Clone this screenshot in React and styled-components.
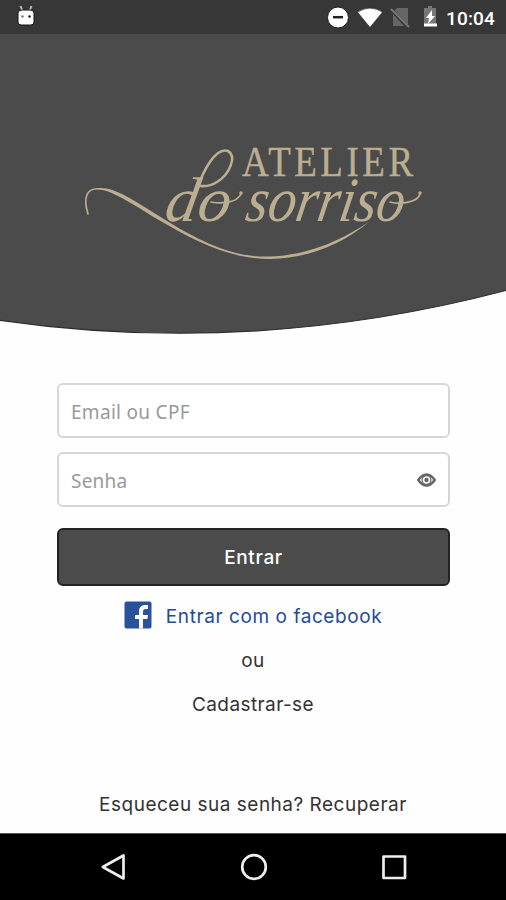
import React from "react";
import styled, { createGlobalStyle } from "styled-components";

const GlobalStyle = createGlobalStyle`
  *, *::before, *::after { box-sizing: border-box; }
  body { margin: 0; background: #fff; }
  svg { display: block; flex: none; }
`;

const Screen = styled.main`
  width: 506px;
  height: 900px;
  display: flex;
  flex-direction: column;
  overflow: hidden;
  background: #fefefe;
  font-family: Inter, "Open Sans", sans-serif;
`;

const StatusBar = styled.header`
  height: 34px;
  flex: none;
  display: flex;
  align-items: center;
  justify-content: space-between;
  padding: 0 10px 0 16px;
  background: #373737;
`;

const StatusIcons = styled.div`
  display: flex;
  align-items: center;
`;

const Clock = styled.time`
  width: 50px;
  margin-left: 8px;
  padding-top: 3px;
  font: 500 19px/22px Roboto, sans-serif;
  letter-spacing: 0.15px;
  white-space: nowrap;
  color: #fff;
`;

const Hero = styled.section`
  height: 301px;
  flex: none;
`;

const Form = styled.form`
  display: flex;
  flex-direction: column;
  margin: 48px 56px 0 57px;
`;

const Field = styled.label`
  height: 55px;
  margin-bottom: ${(p) => p.$gap}px;
  display: flex;
  align-items: center;
  padding: 0 12px;
  border: 2px solid #d6d6d6;
  border-radius: 6px;
  background: #fff;
`;

const Input = styled.input`
  flex: 1;
  min-width: 0;
  padding: 2px 0 0;
  border: 0;
  outline: 0;
  background: transparent;
  font: 400 19px/26px "Noto Sans", sans-serif;
  letter-spacing: ${(p) => p.$tracking}px;
  &::placeholder { color: #999; opacity: 1; }
`;

const SubmitButton = styled.button`
  height: 58px;
  padding: 1px 0 0;
  border: 2px solid #222;
  border-radius: 6px;
  background: #4b4b4b;
  color: #fff;
  font: 500 19px/24px Inter, sans-serif;
  letter-spacing: 0.65px;
`;

const Links = styled.nav`
  flex: 1;
  display: flex;
  flex-direction: column;
  align-items: center;
  padding-top: 14px;
`;

const FacebookLink = styled.a`
  height: 30px;
  display: flex;
  align-items: center;
  gap: 14px;
  color: #234b98;
`;

const Label = styled.span`
  font-size: 19px;
  line-height: 24px;
  white-space: nowrap;
  letter-spacing: ${(p) => p.$tracking || 0}px;
  margin-top: ${(p) => p.$top || 0}px;
  color: ${(p) => p.$color || "#333"};
`;

const NavBar = styled.footer`
  height: 67px;
  flex: none;
  display: flex;
  align-items: center;
  justify-content: space-between;
  padding: 0 98px 0 99px;
  border-top: 1px solid #555;
  background: #000;
`;

function DebugIcon() {
  return (
    <svg width="20" height="24" viewBox="0 0 20 24">
      <path d="M4.500 1l2 5M15.500 1l-2 5" stroke="#bbb" strokeWidth="2" />
      <path d="M2 8q0-3 4-3h8q4 0 4 3v9q0 3-3 3H5q-3 0-3-3z" fill="#fff" stroke="#171717" />
      <circle cx="6.500" cy="11.500" r="1.200" fill="#777" />
      <circle cx="13.500" cy="11.500" r="1.200" fill="#111" />
    </svg>
  );
}

function SystemIcons() {
  return (
    <svg width="112" height="26" viewBox="0 0 112 26">
      <circle cx="12" cy="13.500" r="10.500" fill="#fff" stroke="#1e1e1e" />
      <path d="M7 13.200h10" stroke="#222" strokeWidth="2.500" />
      <path d="M31.500 8.200Q44 0 56.500 8.200L44 23.500Z" fill="#fff" stroke="#222" strokeWidth=".7" />
      <path d="M71 4h11v17L68.500 6.500z M67 10v12h11z" fill="#666" />
      <path d="M65 5l18 18" stroke="#777" strokeWidth="2" />
      <path d="M99 4h3V2h4v2h4v18H98V4z" fill="#777" />
      <path d="M106 6l-6 8h3l-1 6 7-8h-3z" fill="#fff" />
      <path d="M98 21h13" stroke="#fff" strokeWidth="3" />
    </svg>
  );
}

function HeroArt() {
  return (
    <svg width="506" height="301" viewBox="0 34 506 301" fill="none">
      <path d="M0 34H506V290.500Q253 356.800 0 320.300Z" fill="#4b4b4b" />
      <path d="M0 320.300Q253 356.800 506 290.500" stroke="#2e2e2e" strokeWidth="1.200" />
      <g fill="#bcae91" fontFamily="Liberation Serif, serif">
        <text transform="translate(242 176) scale(.86 1)" fontSize="43" letterSpacing="4.1" stroke="#bcae91" strokeWidth=".4">ATELIER</text>
        <g fontStyle="italic">
          <text transform="translate(163 221) skewX(-10)" fontSize="63" textLength="65" lengthAdjust="spacingAndGlyphs">do</text>
          <text transform="translate(244 221) skewX(-10)" fontSize="63" textLength="158" lengthAdjust="spacingAndGlyphs">sorriso</text>
        </g>
      </g>
      <g stroke="#bcae91" strokeLinecap="round">
        <path d="M197 190C203 170 216 147 228 151C237 156 230 174 217 182Q209 187 201 186" strokeWidth="2.600" />
        <path d="M211 202C221 204 237 203 241 194" strokeWidth="1.700" />
        <path d="M390 202C401 205 418 202 420 194" strokeWidth="1.700" />
        <circle cx="241" cy="193" r="1" strokeWidth="1.500" />
        <circle cx="420" cy="193" r="1" strokeWidth="1.500" />
        <path d="M88 214C83 198 86 187 101 189" strokeWidth="1.700" />
      </g>
      <path
        d="M94 189C110 184 132 199 159 216C203 244 236 258 270 256.500C310 255 341 240 369 222C342 244 310 258 270 259C229 259 195 241 157 219C131 203 109 188 94 189Z"
        fill="#bcae91"
      />
    </svg>
  );
}

function EyeIcon() {
  return (
    <svg width="19" height="14" viewBox="0 0 19 14" fill="none" stroke="#666">
      <path d="M1.300 7Q5 1.500 9.500 1.500T17.700 7Q14 12.500 9.500 12.500T1.300 7Z" strokeWidth="2.500" />
      <circle cx="9.500" cy="7" r="4.400" strokeWidth="1.200" />
      <circle cx="9.500" cy="7" r="2.200" fill="#666" stroke="none" />
    </svg>
  );
}

function FacebookIcon() {
  return (
    <svg width="28" height="28" viewBox="0 0 28 28">
      <rect x=".5" y=".5" width="27" height="27" rx="2" fill="#29529a" />
      <path d="M15 27.500V18h-4v-4h4v-3.500Q15 4 21 4h3v4h-2.500Q19 8 19 11v3h5l-.6 4H19v9.500z" fill="#fff" />
    </svg>
  );
}

function BackIcon() {
  return (
    <svg width="28" height="28" viewBox="0 0 28 28" fill="none" stroke="#eee" strokeWidth="2.700" strokeLinejoin="round">
      <path d="M24.500 2.500v23L3.800 14z" />
    </svg>
  );
}

function HomeIcon() {
  return (
    <svg width="28" height="28" viewBox="0 0 28 28" fill="none" stroke="#eee" strokeWidth="2.700">
      <circle cx="14" cy="14" r="11.800" />
    </svg>
  );
}

function RecentsIcon() {
  return (
    <svg width="28" height="28" viewBox="0 0 28 28" fill="none" stroke="#eee" strokeWidth="2.700" strokeLinejoin="round">
      <rect x="3.500" y="3.500" width="21.500" height="21.500" />
    </svg>
  );
}

export default function App() {
  return (
    <>
      <GlobalStyle />
      <Screen>
        <StatusBar>
          <DebugIcon />
          <StatusIcons>
            <SystemIcons />
            <Clock>10:04</Clock>
          </StatusIcons>
        </StatusBar>
        <Hero>
          <HeroArt />
        </Hero>
        <Form onSubmit={(e) => e.preventDefault()}>
          <Field $gap={14}>
            <Input placeholder="Email ou CPF" $tracking={0.3} />
          </Field>
          <Field $gap={21}>
            <Input type="password" placeholder="Senha" $tracking={0.2} />
            <EyeIcon />
          </Field>
          <SubmitButton>Entrar</SubmitButton>
        </Form>
        <Links>
          <FacebookLink>
            <FacebookIcon />
            <Label $color="#234b98" $tracking={0.57} $top={3}>Entrar com o facebook</Label>
          </FacebookLink>
          <Label $top={19} $tracking={0.5}>ou</Label>
          <Label $top={20} $tracking={0.4}>Cadastrar-se</Label>
          <Label $top={76} $tracking={0.5}>Esqueceu sua senha? Recuperar</Label>
        </Links>
        <NavBar>
          <BackIcon />
          <HomeIcon />
          <RecentsIcon />
        </NavBar>
      </Screen>
    </>
  );
}
